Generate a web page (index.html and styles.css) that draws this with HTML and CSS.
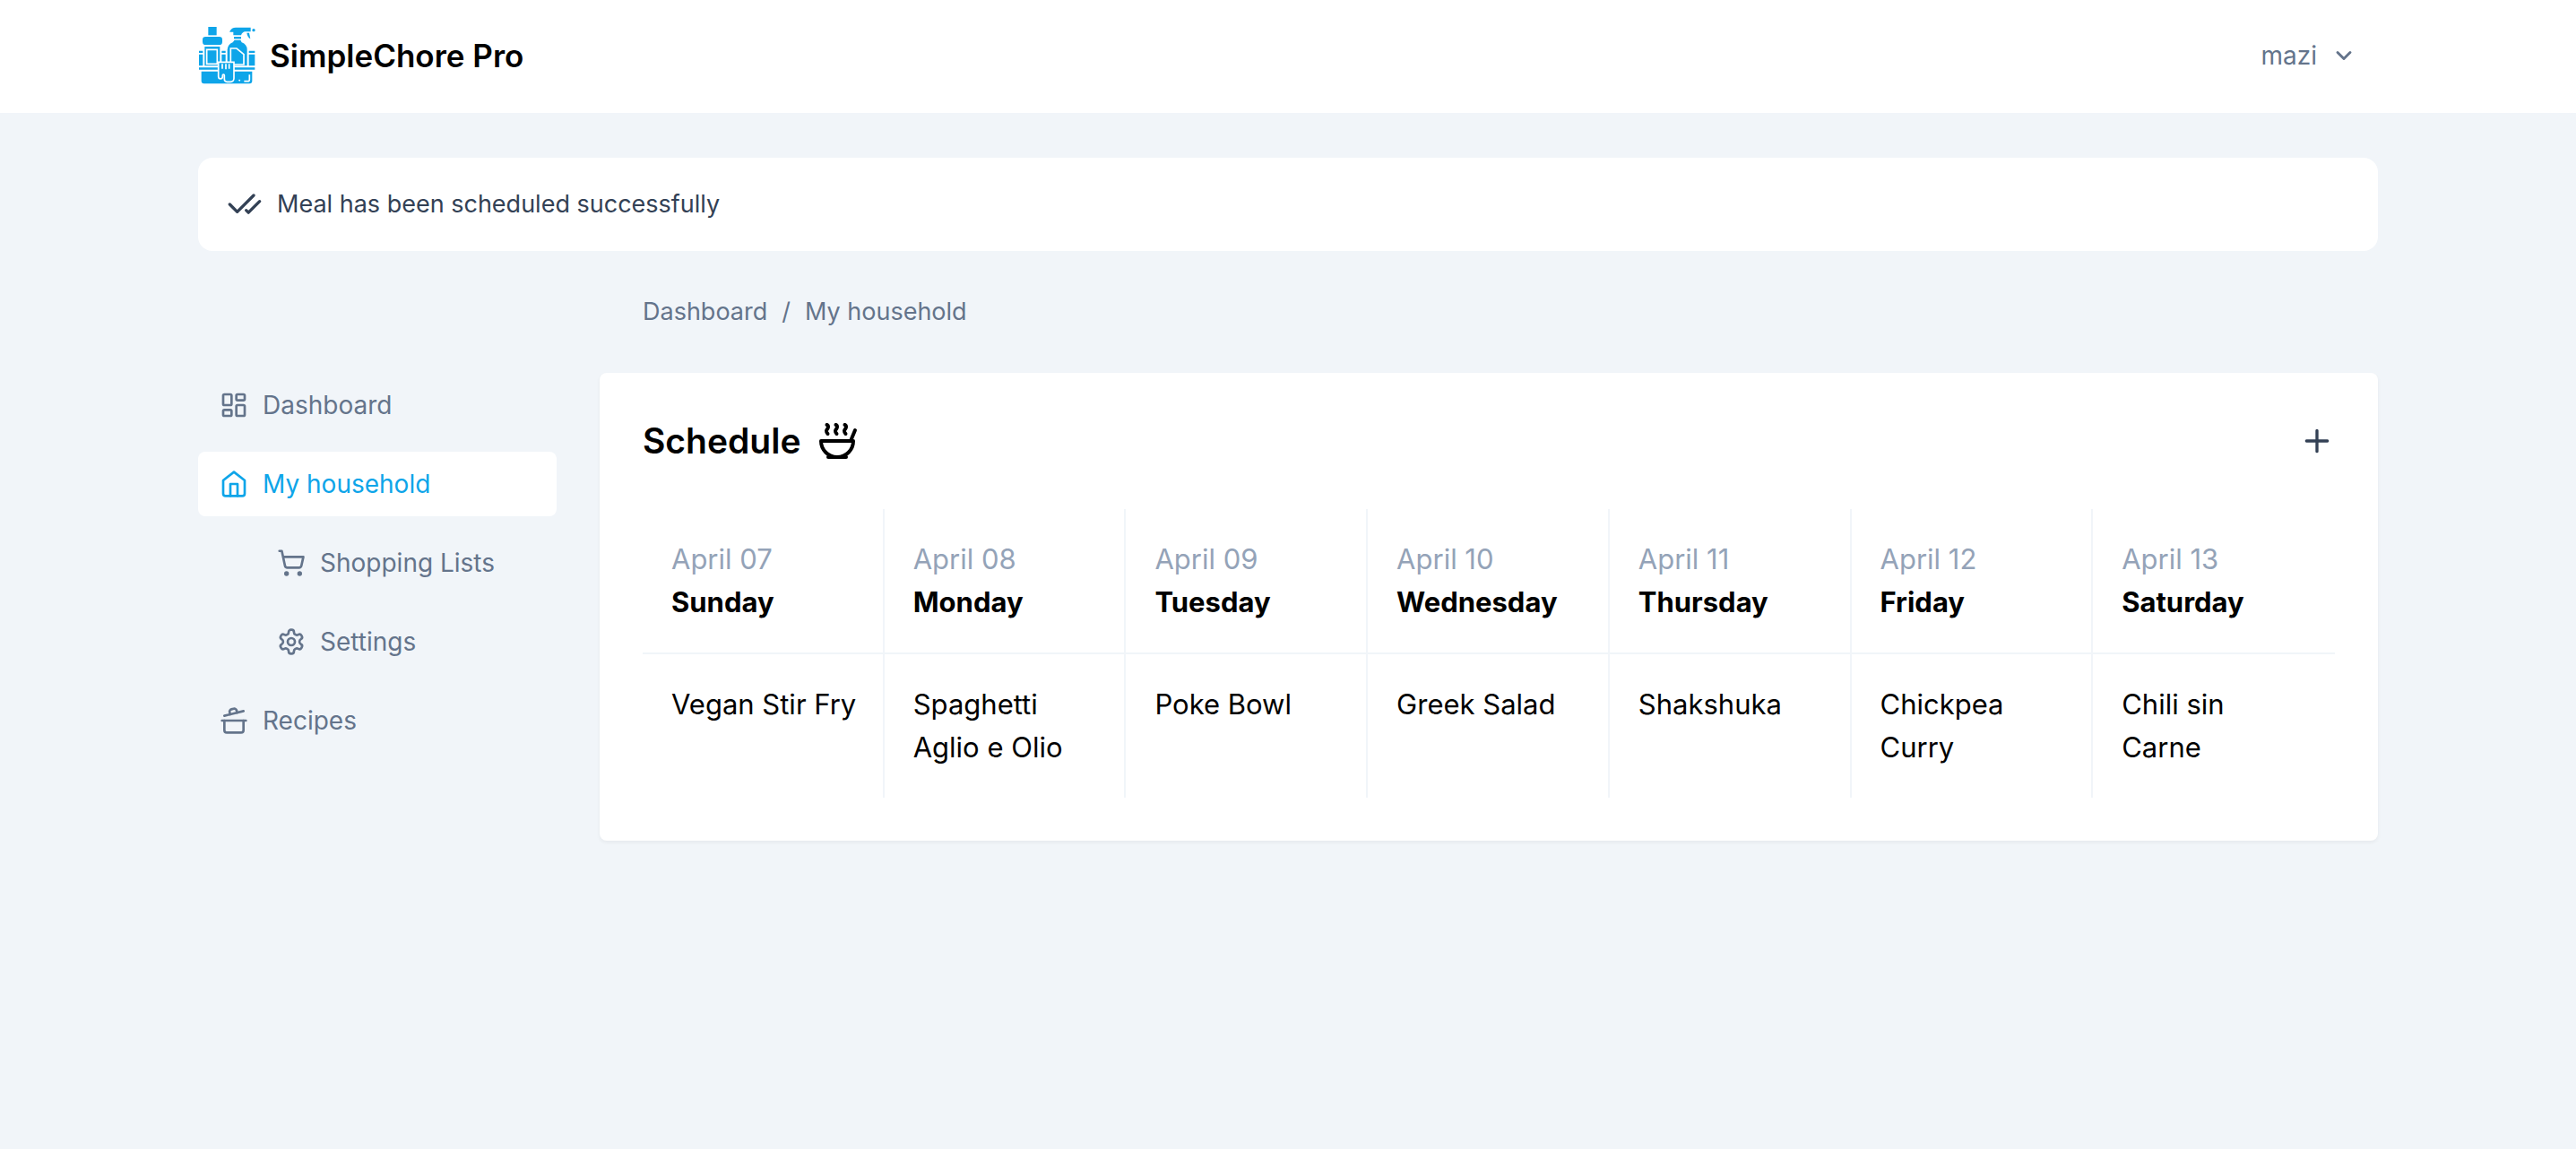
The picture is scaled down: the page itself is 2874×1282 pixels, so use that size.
FILE: index.html
```html
<!DOCTYPE html>
<html lang="en">
<head>
<meta charset="utf-8">
<meta name="viewport" content="width=device-width, initial-scale=1">
<title>SimpleChore Pro</title>
<link rel="stylesheet" href="styles.css">
</head>
<body>
<header class="topbar">
  <div class="container topbar-inner">
    <a class="brand" href="#">
      <svg class="logo" viewBox="0 0 192 192" fill="currentColor" aria-hidden="true">
        <path d="M34 0h28v28H34z"/>
        <rect x="15" y="33" width="66" height="27" rx="10"/>
        <path d="M22 66h51v64H22z"/>
        <path class="cut" d="M29 76h35v48H29z"/>
        <path d="M106 15Q112 2 126 2h50v14h-18q-10 1-14 12h-26V17h-12z"/>
        <circle cx="186" cy="11" r="5"/>
        <path d="M163 20h8l4 20q-10-6-12-20z"/>
        <path d="M120 33h24v7h-24z"/>
        <path d="M98 130V76q0-16 18-24l6-8h20l4 8q18 7 18 24v54z"/>
        <path class="cut" d="M109 126V72h20l24 20v34z"/>
        <path d="M3 92h13v38H3zM3 80h13v7H3zM79 92h13v38H79zM79 80h13v7H79zM170 92h20v38h-20zM170 80h20v7h-20z"/>
        <path d="M3 136h187v7H3zM11 149h170v32q0 9-9 9H20q-9 0-9-9z"/>
        <path class="cut" d="M172 160v16q0 6-6 6h-12M137 181l3-4"/>
        <path class="glove" d="M68 118h52v54q0 12-12 12H97q-9 0-9-9v-13q0-3-3-3t-3 3v4q0 8-7 8t-7-8z"/>
        <path class="cut" d="M81 124v16M93 124v18M104 124v16"/>
      </svg>
      <span>SimpleChore Pro</span>
    </a>
    <button class="user-menu" type="button">
      <span>mazi</span>
      <svg class="icon icon-chevron" viewBox="0 0 24 24" aria-hidden="true"><path d="m6 9 6 6 6-6"/></svg>
    </button>
  </div>
</header>

<div class="container page">
  <div class="alert" role="status">
    <svg class="icon icon-lg" viewBox="0 0 24 24" aria-hidden="true"><path d="M18 6 7 17l-5-5"/><path d="m22 10-7.5 7.5L13 16"/></svg>
    <span>Meal has been scheduled successfully</span>
  </div>

  <div class="layout">
    <nav class="breadcrumb" aria-label="Breadcrumb">
      <a href="#">Dashboard</a>
      <span>/</span>
      <a href="#">My household</a>
    </nav>

    <nav class="sidebar" aria-label="Main">
      <a class="nav-link" href="#">
        <svg class="icon" viewBox="0 0 24 24" aria-hidden="true"><rect x="3" y="3" width="7" height="9" rx="1"/><rect x="14" y="3" width="7" height="5" rx="1"/><rect x="14" y="12" width="7" height="9" rx="1"/><rect x="3" y="16" width="7" height="5" rx="1"/></svg>
        <span>Dashboard</span>
      </a>
      <a class="nav-link active" href="#" aria-current="page">
        <svg class="icon" viewBox="0 0 24 24" aria-hidden="true"><path d="m3 9 9-7 9 7v11a2 2 0 0 1-2 2H5a2 2 0 0 1-2-2z"/><path d="M9 22V12h6v10"/></svg>
        <span>My household</span>
      </a>
      <a class="nav-link nested" href="#">
        <svg class="icon" viewBox="0 0 24 24" aria-hidden="true"><circle cx="8" cy="21" r="1"/><circle cx="19" cy="21" r="1"/><path d="M2.05 2.05h2l2.66 12.42a2 2 0 0 0 2 1.58h9.78a2 2 0 0 0 1.95-1.57l1.65-7.43H5.12"/></svg>
        <span>Shopping Lists</span>
      </a>
      <a class="nav-link nested" href="#">
        <svg class="icon" viewBox="0 0 24 24" aria-hidden="true"><path d="M12.22 2h-.44a2 2 0 0 0-2 2v.18a2 2 0 0 1-1 1.73l-.43.25a2 2 0 0 1-2 0l-.15-.08a2 2 0 0 0-2.73.73l-.22.38a2 2 0 0 0 .73 2.73l.15.1a2 2 0 0 1 1 1.72v.51a2 2 0 0 1-1 1.74l-.15.09a2 2 0 0 0-.73 2.73l.22.38a2 2 0 0 0 2.73.73l.15-.08a2 2 0 0 1 2 0l.43.25a2 2 0 0 1 1 1.73V20a2 2 0 0 0 2 2h.44a2 2 0 0 0 2-2v-.18a2 2 0 0 1 1-1.73l.43-.25a2 2 0 0 1 2 0l.15.08a2 2 0 0 0 2.73-.73l.22-.39a2 2 0 0 0-.73-2.73l-.15-.08a2 2 0 0 1-1-1.74v-.5a2 2 0 0 1 1-1.74l.15-.09a2 2 0 0 0 .73-2.73l-.22-.38a2 2 0 0 0-2.73-.73l-.15.08a2 2 0 0 1-2 0l-.43-.25a2 2 0 0 1-1-1.73V4a2 2 0 0 0-2-2z"/><circle cx="12" cy="12" r="3"/></svg>
        <span>Settings</span>
      </a>
      <a class="nav-link" href="#">
        <svg class="icon" viewBox="0 0 24 24" aria-hidden="true"><path d="M2 12h20"/><path d="M20 12v8a2 2 0 0 1-2 2H6a2 2 0 0 1-2-2v-8"/><path d="m4 8 16-4"/><path d="m8.86 6.78-.45-1.81a2 2 0 0 1 1.45-2.43l1.94-.48a2 2 0 0 1 2.43 1.46l.45 1.8"/></svg>
        <span>Recipes</span>
      </a>
    </nav>

    <main class="card">
      <div class="card-header">
        <h1 class="card-title">
          <span>Schedule</span>
          <svg class="icon icon-xl" viewBox="0 0 24 24" aria-hidden="true"><path d="M12 21a9 9 0 0 0 9-9H3a9 9 0 0 0 9 9Z"/><path d="M7 21h10"/><path d="M19.5 12 22 6"/><path d="M16.25 3c.27.1.8.53.75 1.36-.06.83-.93 1.2-1 2.02-.05.78.34 1.24.73 1.62"/><path d="M11.25 3c.27.1.8.53.74 1.36-.05.83-.93 1.2-.98 2.02-.06.78.33 1.24.72 1.62"/><path d="M6.25 3c.27.1.8.53.75 1.36-.06.83-.93 1.2-1 2.02-.05.78.34 1.24.74 1.62"/></svg>
        </h1>
        <button class="add-button" type="button" aria-label="Schedule a meal">
          <svg class="icon icon-lg" viewBox="0 0 24 24" aria-hidden="true"><path d="M5 12h14M12 5v14"/></svg>
        </button>
      </div>
      <table class="schedule">
        <thead>
          <tr>
            <th scope="col"><span class="date">April 07</span><span class="day">Sunday</span></th>
            <th scope="col"><span class="date">April 08</span><span class="day">Monday</span></th>
            <th scope="col"><span class="date">April 09</span><span class="day">Tuesday</span></th>
            <th scope="col"><span class="date">April 10</span><span class="day">Wednesday</span></th>
            <th scope="col"><span class="date">April 11</span><span class="day">Thursday</span></th>
            <th scope="col"><span class="date">April 12</span><span class="day">Friday</span></th>
            <th scope="col"><span class="date">April 13</span><span class="day">Saturday</span></th>
          </tr>
        </thead>
        <tbody>
          <tr>
            <td>Vegan Stir Fry</td>
            <td>Spaghetti Aglio e Olio</td>
            <td>Poke Bowl</td>
            <td>Greek Salad</td>
            <td>Shakshuka</td>
            <td>Chickpea Curry</td>
            <td>Chili sin Carne</td>
          </tr>
        </tbody>
      </table>
    </main>
  </div>
</div>
</body>
</html>
```

FILE: styles.css
```css
* {
  box-sizing: border-box;
}

body {
  margin: 0;
  background: #f1f5f9;
  color: #000;
  font-family: Inter, "Liberation Sans", sans-serif;
  font-size: 27px;
  line-height: 40px;
}

a {
  color: inherit;
  text-decoration: none;
}

button {
  padding: 0;
  border: 0;
  background: none;
  color: inherit;
  font: inherit;
  cursor: pointer;
}

.container {
  max-width: 2560px;
  margin: 0 auto;
  padding: 0 64px;
}

/* Icons */
.icon {
  flex: none;
  width: 32px;
  height: 32px;
  fill: none;
  stroke: currentColor;
  stroke-width: 2;
  stroke-linecap: round;
  stroke-linejoin: round;
}

.icon-chevron {
  width: 28px;
  height: 28px;
  stroke-width: 2.5;
}

.icon-lg {
  width: 40px;
  height: 40px;
}

.icon-xl {
  width: 48px;
  height: 48px;
}

/* Top bar */
.topbar {
  padding: 30px 0 32px;
  background: #fff;
}

.topbar-inner {
  display: flex;
  align-items: center;
  justify-content: space-between;
}

.brand {
  display: flex;
  align-items: center;
  gap: 16px;
  font-size: 35px;
  font-weight: 600;
}

.logo {
  width: 64px;
  height: 64px;
  color: #0ea5e9;
}

.logo .cut {
  fill: none;
  stroke: #fff;
  stroke-width: 5;
}

.logo .glove {
  stroke: #fff;
  stroke-width: 5;
}

.user-menu {
  display: flex;
  align-items: center;
  gap: 16px;
  padding: 0 24px;
  color: #64748b;
  font-size: 28px;
}

/* Page */
.page {
  padding-top: 50px;
  padding-bottom: 48px;
}

.alert {
  display: flex;
  align-items: center;
  gap: 16px;
  padding: 32px;
  border-radius: 16px;
  background: #fff;
  color: #334155;
}

.layout {
  display: grid;
  grid-template-columns: 400px minmax(0, 1fr);
  gap: 48px;
  align-items: start;
  margin-top: 48px;
}

.breadcrumb {
  grid-column: 2;
  display: flex;
  gap: 16px;
  padding: 0 48px;
  color: #64748b;
}

/* Sidebar */
.sidebar {
  display: flex;
  flex-direction: column;
  gap: 16px;
  color: #64748b;
  font-size: 28px;
}

.nav-link {
  display: flex;
  align-items: center;
  gap: 16px;
  padding: 16px 24px;
  border-radius: 8px;
}

.nav-link.nested {
  margin-left: 64px;
}

.nav-link.active {
  background: #fff;
  color: #0ea5e9;
}

/* Schedule card */
.card {
  padding: 48px;
  border-radius: 8px;
  background: #fff;
  box-shadow: 0 2px 4px rgba(0, 0, 0, 0.05);
}

.card-header {
  display: flex;
  align-items: center;
  justify-content: space-between;
  margin-bottom: 48px;
}

.card-title {
  display: flex;
  align-items: center;
  gap: 16px;
  margin: 0;
  font-size: 39px;
  font-weight: 600;
  line-height: 56px;
}

.add-button {
  display: flex;
  color: #334155;
}

.schedule {
  width: 100%;
  table-layout: fixed;
  border-collapse: separate;
  border-spacing: 0;
  font-size: 31px;
  line-height: 48px;
}

.schedule th,
.schedule td {
  padding: 32px 24px 32px 32px;
  border-right: 2px solid #f1f5f9;
  text-align: left;
  vertical-align: top;
}

.schedule th {
  border-bottom: 2px solid #f1f5f9;
}

.schedule th:last-child,
.schedule td:last-child {
  padding-right: 32px;
  border-right: 0;
}

.date,
.day {
  display: block;
}

.date {
  color: #94a3b8;
  font-weight: 400;
}

.day {
  font-weight: 700;
}
```
